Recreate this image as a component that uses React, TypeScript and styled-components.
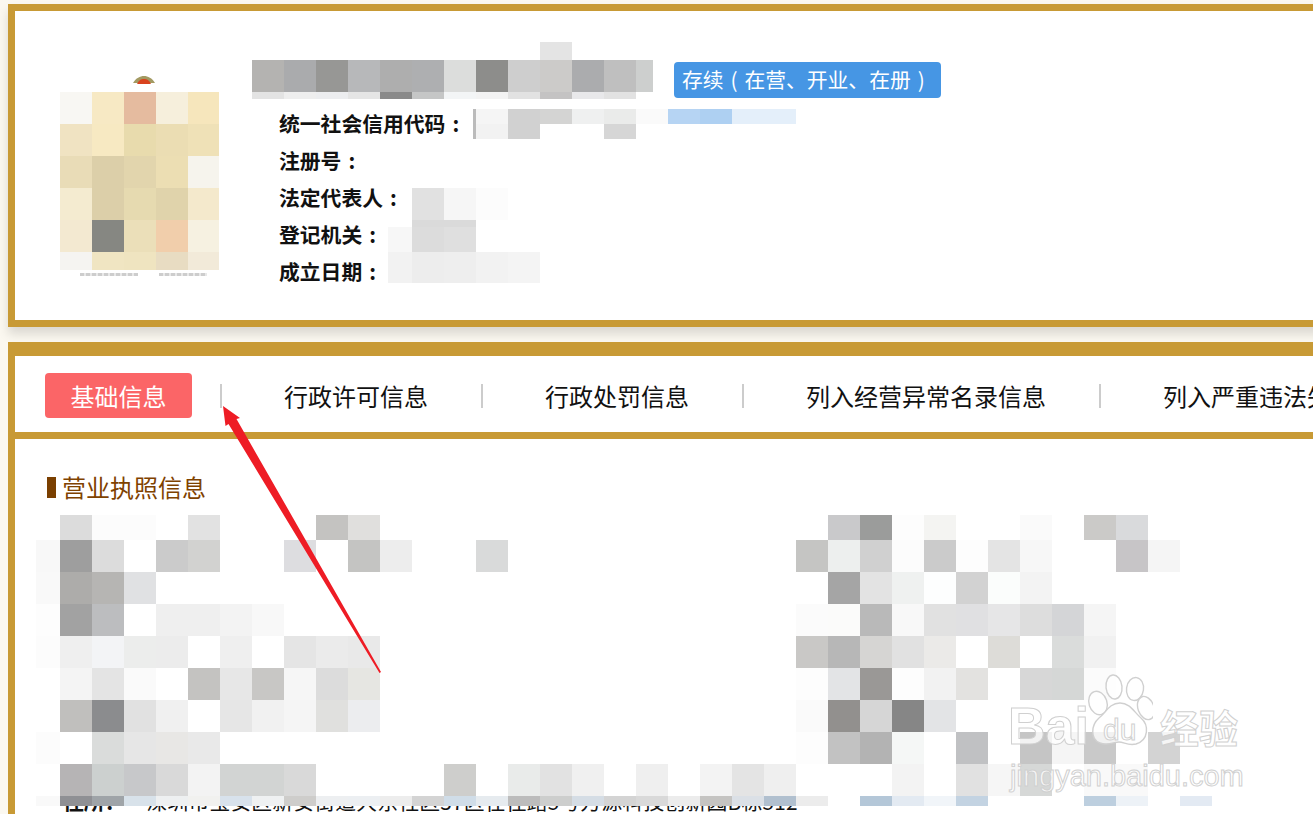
import styled, { createGlobalStyle } from "styled-components";

const GOLD = "#c89a35";

// the blurred blocks of the screenshot: one array per row, "" = nothing there
type Blocks = string[][];

const sparse = (row: Record<number, string>) => {
  const out: string[] = new Array(37).fill("");
  Object.entries(row).forEach(([x, c]) => {
    const col = Number(x) === 36 ? 0 : (Number(x) - 60) / 32 + 1;
    out[col] = c;
  });
  return out;
};

const nameBlocks: Blocks = [
  ["", "", "", "", "", "", "", "", "", "#e4e4e4", "", "", ""],
  ["#b4b3b1", "#aaabad", "#979795", "#b7b8ba", "#aeaeae", "#aeafb1", "#dcdddc", "#8d8d8b", "#cecece", "#cccbc9", "#abacae", "#bfbfbf", "#cdcfce"],
  ["#e3e3e3", "#eeeeee", "#ecedef", "#e5e5e5", "#8a8a8a", "#c5c6c6", "#f3f5f6", "#f3f3f3", "#e2e2e2", "#c4c3c3", "#e8e8ea", "#e2e2e2", ""],
];

const codeBlocks: Blocks = [
  ["#bbbbbb", "#f5f5f5", "#d1d1d1", "#d4d4d3", "#eff0f0", "#eaebea", "#fafafa", "#b6d4f3", "#aed0f2", "#e4effa", "#e4effa"],
  ["#bbbbbb", "#f2f2f2", "#d1d1d1", "", "", "#d6d6d6", "", "", "", "", ""],
];

const legalBlocks: Blocks = [["#e1e1e1", "#f6f6f6", "#fcfcfc"]];

const officeBlocks: Blocks = [
  ["", "#dadada", "#dadada"],
  ["#f7f7f7", "#dcdcdc", "#dfdfdf"],
];

const dateBlocks: Blocks = [["#f2f2f2", "#ededed", "#eeeeee", "#f2f2f2", "#f4f4f4"]];

const emblemBlocks: Blocks = [
  ["#f8f7f3", "#f7e9c4", "#e5bb9f", "#f6efdc", "#f6e6bc"],
  ["#f0e3c2", "#f7e9c2", "#e8dbad", "#ebddb3", "#efe1b7"],
  ["#e9dcb7", "#dccfa9", "#e2d5ad", "#ecdeb3", "#f6f4ed"],
  ["#f4ebd0", "#dccfa9", "#e6dab0", "#e0d3ab", "#f4e9cc"],
  ["#f3e9d1", "#868782", "#ebdfb9", "#f1ceab", "#f6f1e1"],
  ["#f5f4f1", "#f0e5c2", "#efe4c0", "#e8dcc2", "#f2ead9"],
];

const licenceBlocks: Blocks = [
  { 60: "#dcdcdc", 92: "#fcfcfc", 124: "#fcfcfc", 188: "#e2e2e2", 316: "#c4c3c1", 348: "#e0dfdd", 828: "#c9c9cb", 860: "#9b9c9b", 892: "#fdfdfd", 924: "#f4f4f2", 1020: "#fafafa", 1084: "#cbcac8", 1116: "#d9dadc" },
  { 36: "#f8f8f8", 60: "#9e9e9e", 92: "#dcdcdc", 156: "#cbcbcb", 188: "#d2d2d0", 284: "#dddde0", 348: "#c4c4c2", 380: "#ededed", 476: "#d9dada", 796: "#c5c5c3", 828: "#edefee", 860: "#d0d0d0", 892: "#fcfcfc", 924: "#cbcbcb", 956: "#fdfdfd", 988: "#e4e4e4", 1020: "#f7f7f7", 1116: "#c7c5c7", 1148: "#f5f5f5" },
  { 36: "#f9f9f9", 60: "#adacaa", 92: "#b6b5b3", 124: "#e0e1e3", 828: "#a5a5a5", 860: "#e3e3e3", 892: "#eff1f0", 924: "#fdfefe", 956: "#d2d2d2", 988: "#fbfdfc", 1020: "#f3f3f3" },
  { 36: "#fdfdfd", 60: "#a2a2a2", 92: "#bcbdbf", 156: "#efefef", 188: "#efefef", 220: "#f3f3f3", 252: "#f8f8f8", 796: "#fbfbfb", 828: "#fbfbfa", 860: "#b9b9b9", 892: "#f8f8f8", 924: "#e1e1e1", 956: "#e0e0e2", 988: "#e6e6e7", 1020: "#dddddd", 1052: "#d4d5d7", 1084: "#f5f5f5" },
  { 36: "#fcfcfc", 60: "#efefef", 92: "#f3f4f6", 124: "#ecedec", 156: "#ececec", 220: "#efefef", 284: "#e5e5e5", 316: "#ebebeb", 348: "#e9e9e9", 796: "#c9c8c6", 828: "#b7b7b7", 860: "#d6d5d3", 892: "#e1e1e1", 924: "#ebeae8", 988: "#dddcd8", 1052: "#dadcdb", 1084: "#f1f1f1" },
  { 60: "#f4f4f4", 92: "#e4e4e4", 124: "#fafafa", 188: "#c4c3c1", 220: "#e7e7e7", 252: "#c8c7c5", 284: "#f6f6f6", 316: "#dcdcdc", 348: "#e6e6e2", 796: "#fdfdfd", 828: "#e3e4e6", 860: "#9a9896", 892: "#fdfdfd", 924: "#f2f2f2", 956: "#e3e2e0", 1020: "#d7d7d7", 1052: "#d5d7d6", 1084: "#fbfbfb" },
  { 60: "#c0bfbd", 92: "#8b8c8e", 124: "#e1e1e1", 156: "#f0f0f0", 220: "#e6e6e6", 252: "#f1f1f1", 284: "#f5f5f5", 316: "#e0e0de", 348: "#ecedef", 796: "#fafafa", 828: "#92908e", 860: "#d6d6d6", 892: "#868686", 924: "#e3e4e6" },
  { 36: "#fcfcfc", 92: "#dadcdb", 124: "#e6e6e6", 156: "#e8e7e5", 188: "#e9e9e9", 796: "#fdfdfd", 828: "#c2c2c2", 860: "#b3b3b3", 892: "#f5f7f6", 956: "#c0c1c3", 1020: "#c5c5c5", 1052: "#f5f5f5", 1084: "#c9c9c9", 1148: "#d3d3d3" },
  // white tiles here hide the top of the address line below
  { 60: "#b6b4b5", 92: "#ccd0cf", 124: "#c7c8ca", 156: "#d9d9d9", 188: "#f3f3f3", 220: "#d2d4d3", 252: "#d2d4d3", 284: "#d9d9d9", 316: "#fff", 348: "#fff", 380: "#fff", 412: "#fff", 444: "#cececc", 476: "#fff", 508: "#e9ebea", 540: "#e2e2e2", 572: "#f0f0f0", 604: "#fff", 636: "#efefef", 668: "#fff", 700: "#f3f3f3", 732: "#e4e4e4", 764: "#efefef", 892: "#f3f3f3", 956: "#e1e1e1", 988: "#f6f6f6", 1020: "#d6d8d7", 1084: "#f9f9f9", 1116: "#f9f9f9" },
  { 36: "#f9f9f9", 60: "#8f9094", 92: "#9fa4a8", 124: "#d8e2ea", 156: "#eef0f1", 188: "#f1f1ef", 220: "#d8e2ec", 252: "#eff1f2", 284: "#cecdcb", 316: "#edeff1", 348: "#eceff2", 380: "#ededed", 412: "#d4d4d4", 444: "#d0dde8", 476: "#e6ebef", 508: "#bcbcbc", 540: "#cdcecd", 572: "#d5dde5", 604: "#d4d4d4", 636: "#d9d9d9", 668: "#ececec", 700: "#c5c4c2", 732: "#dbe0e6", 764: "#b1c0cf", 796: "#ececec", 860: "#b4c7d8", 892: "#e3eaf2", 924: "#f1f5f9", 956: "#c3d3e2", 1084: "#bdcfdf", 1116: "#edf2f7", 1180: "#e3eaf3" },
].map(sparse);

const Mosaic = ({ cols, rows, blocks }: { cols: string; rows: string; blocks: Blocks }) => (
  <MosaicGrid $cols={cols} $rows={rows}>
    {blocks.flatMap((row, r) => row.map((c, i) => <Tile key={`${r}-${i}`} $c={c} />))}
  </MosaicGrid>
);

const App = () => {
  return (
    <Page>
      <GlobalStyle />
      <TopCard>
        <Emblem>
          <Dome width="24" height="8" viewBox="0 0 24 8">
            <path d="M1 7C4 2 8 0 12 0s8 2 11 7z" fill="#a39a62" />
            <path d="M5 8C7 4 9 3 12 3s5 1 7 5z" fill="#d9431f" />
          </Dome>
          <Mosaic cols="repeat(4, 32px) 31px" rows="repeat(5, 32px) 18px" blocks={emblemBlocks} />
          <EmblemCaption>
            <CaptionBar $w={58} />
            <CaptionBar $w={48} />
          </EmblemCaption>
        </Emblem>
        <Info>
          <NameRow>
            <Mosaic cols="repeat(12, 32px) 17px" rows="18px 32px 7px" blocks={nameBlocks} />
            <StatusBadge>
              存续<Paren>(</Paren>在营、开业、在册<Paren>)</Paren>
            </StatusBadge>
          </NameRow>
          <Fields>
            <Field>
              <FieldLabel>
                统一社会信用代码<Colon>:</Colon>
              </FieldLabel>
              <FieldValue $top={3} $left={7}>
                <Mosaic cols="3px repeat(10, 32px)" rows="15px 15px" blocks={codeBlocks} />
              </FieldValue>
            </Field>
            <Field>
              <FieldLabel>
                注册号<Colon>:</Colon>
              </FieldLabel>
            </Field>
            <Field>
              <FieldLabel>
                法定代表人<Colon>:</Colon>
              </FieldLabel>
              <FieldValue $top={8} $left={8}>
                <Mosaic cols="repeat(3, 32px)" rows="32px" blocks={legalBlocks} />
              </FieldValue>
            </Field>
            <Field>
              <FieldLabel>
                登记机关<Colon>:</Colon>
              </FieldLabel>
              <FieldValue $top={3} $left={5}>
                <Mosaic cols="24px 32px 32px" rows="7px 25px" blocks={officeBlocks} />
              </FieldValue>
            </Field>
            <Field>
              <FieldLabel>
                成立日期<Colon>:</Colon>
              </FieldLabel>
              <FieldValue $top={-2} $left={5}>
                <Mosaic cols="24px repeat(4, 32px)" rows="31px" blocks={dateBlocks} />
              </FieldValue>
            </Field>
          </Fields>
        </Info>
      </TopCard>

      <DetailCard>
        <TabBar>
          <ActiveTab>基础信息</ActiveTab>
          <TabDivider />
          <Tab>行政许可信息</Tab>
          <TabDivider />
          <Tab>行政处罚信息</Tab>
          <TabDivider />
          <Tab>列入经营异常名录信息</Tab>
          <TabDivider />
          <Tab>列入严重违法失信企业名单信息</Tab>
        </TabBar>
        <Content>
          <SectionTitle>营业执照信息</SectionTitle>
          <LicenceArea>
            <Mosaic cols="24px repeat(36, 32px)" rows="25px repeat(8, 32px) 10px" blocks={licenceBlocks} />
          </LicenceArea>
          <Address>
            <b>住所：</b>
            <AddressValue>深圳市宝安区新安街道大东社区37区在径路5号万源科技创新园B栋512</AddressValue>
          </Address>
        </Content>
      </DetailCard>

      <Arrow width="170" height="280" viewBox="0 0 170 280">
        <polygon points="3,2 20,14 16.5,15 161,268 159.5,269 8.5,20 5.5,22" fill="#ee1c25" />
      </Arrow>

      <Watermark>
        <WatermarkLogo>
          <WatermarkBig>Bai</WatermarkBig>
          <Paw width="66" height="76" viewBox="0 0 66 76">
            <g fill="#fff" fillOpacity="0.75" stroke="#d0d0d0" strokeWidth="1.4">
              <ellipse cx="11" cy="30" rx="9" ry="12" transform="rotate(-18 11 30)" />
              <ellipse cx="27" cy="14" rx="8" ry="12" transform="rotate(-6 27 14)" />
              <ellipse cx="48" cy="16" rx="8.5" ry="11.5" transform="rotate(8 48 16)" />
              <ellipse cx="59" cy="35" rx="8" ry="12" transform="rotate(-20 59 35)" />
              <path d="M33 30c10 0 14 9 21 15 8 7 8 22-5 26-8 2-12-2-17-2s-11 4-19 1C3 66 4 52 12 45c7-5 10-15 21-15z" />
            </g>
          </Paw>
          <PawText>du</PawText>
          <WatermarkCjk>经验</WatermarkCjk>
        </WatermarkLogo>
        <WatermarkUrl>jingyan.baidu.com</WatermarkUrl>
      </Watermark>
    </Page>
  );
};
export default App;

const GlobalStyle = createGlobalStyle`
  html, body {
    margin: 0;
    padding: 0;
    background: #fbf8f0;
  }
  body {
    font-family: "Noto Sans CJK SC", "Liberation Sans", sans-serif;
  }
`;

const Page = styled.div`
  position: relative;
  width: 1313px;
  height: 814px;
  overflow: hidden;
  padding: 4px 0 0 8px;
  box-sizing: border-box;
`;

const MosaicGrid = styled.div<{ $cols: string; $rows: string }>`
  display: grid;
  grid-template-columns: ${(p) => p.$cols};
  grid-template-rows: ${(p) => p.$rows};
  width: max-content;
`;

const Tile = styled.div<{ $c: string }>`
  background: ${(p) => p.$c || "transparent"};
`;

const TopCard = styled.section`
  display: flex;
  align-items: flex-start;
  box-sizing: border-box;
  width: 1340px;
  height: 323px;
  padding-left: 45px;
  background: #fff;
  border: 7px solid ${GOLD};
  border-right: none;
  box-shadow: 0 7px 10px rgba(0, 0, 0, 0.13);
`;

const Emblem = styled.div`
  display: flex;
  flex-direction: column;
  width: 159px;
  margin-top: 65px;
`;

const Dome = styled.svg`
  display: block;
  margin: 0 0 8px 72px;
`;

const EmblemCaption = styled.div`
  display: flex;
  gap: 21px;
  margin: 3px 0 0 20px;
`;

const CaptionBar = styled.div<{ $w: number }>`
  width: ${(p) => p.$w}px;
  height: 3px;
  background: repeating-linear-gradient(90deg, #cdcdcd 0 4px, #e8e8e8 4px 6px);
`;

const Info = styled.div`
  margin: 31px 0 0 33px;
`;

const NameRow = styled.div`
  display: flex;
  align-items: flex-start;
`;

const StatusBadge = styled.div`
  margin: 20px 0 0 21px;
  padding: 0 9px 0 8px;
  height: 36px;
  line-height: 35px;
  font-size: 20.8px;
  color: #fff;
  background: #4696e4;
  border-radius: 4px;
  white-space: nowrap;
`;

const Paren = styled.span`
  display: inline-block;
  width: 1em;
  text-align: center;
`;

const Fields = styled.div`
  margin: 7px 0 0 27px;
`;

const Field = styled.div`
  display: flex;
  align-items: flex-start;
  height: 37px;
`;

const FieldLabel = styled.div`
  font-size: 20.8px;
  font-weight: 700;
  line-height: 35px;
  color: #111;
  white-space: nowrap;
`;

const Colon = styled.span`
  display: inline-block;
  width: 1em;
  text-align: center;
`;

const FieldValue = styled.div<{ $top: number; $left: number }>`
  margin-top: ${(p) => p.$top}px;
  margin-left: ${(p) => p.$left}px;
`;

const DetailCard = styled.section`
  box-sizing: border-box;
  width: 1340px;
  height: 500px;
  margin-top: 15px;
  background: #fff;
  border-left: 7px solid ${GOLD};
  border-top: 14px solid ${GOLD};
`;

const TabBar = styled.nav`
  display: flex;
  align-items: center;
  box-sizing: border-box;
  height: 83px;
  padding: 3px 0 0 30px;
  border-bottom: 7px solid ${GOLD};
  font-size: 24px;
  white-space: nowrap;
`;

const ActiveTab = styled.div`
  flex: none;
  width: 147px;
  height: 45px;
  margin-right: 28px;
  line-height: 45px;
  text-align: center;
  color: #fff;
  background: #fb6567;
  border-radius: 4px;
`;

const TabDivider = styled.div`
  flex: none;
  width: 2px;
  height: 24px;
  background: #cccccc;
`;

const Tab = styled.div`
  flex: none;
  padding: 0 53px 0 62px;
  color: #111;
`;

const Content = styled.div`
  padding: 32px 0 0 21px;
`;

const SectionTitle = styled.h2`
  display: flex;
  align-items: center;
  margin: 0 0 12px 11px;
  font-size: 24px;
  font-weight: 400;
  line-height: 32px;
  color: #7f4200;

  &::before {
    content: "";
    width: 9px;
    height: 21px;
    margin-right: 6px;
    background: #7a3f00;
  }
`;

const LicenceArea = styled.div`
  position: relative;
  z-index: 1;
`;

const Address = styled.div`
  display: flex;
  gap: 21px;
  margin: -20px 0 0 27px;
  font-size: 20.8px;
  line-height: 30px;
  color: #111;
  white-space: nowrap;
`;

const AddressValue = styled.span`
  letter-spacing: 0.2px;
`;

const Arrow = styled.svg`
  position: absolute;
  left: 220px;
  top: 404px;
  z-index: 2;
`;

const Watermark = styled.div`
  position: absolute;
  left: 1008px;
  top: 673px;
  z-index: 3;
`;

const WatermarkLogo = styled.div`
  position: relative;
  display: flex;
  align-items: flex-end;
  height: 76px;
`;

const outlined = `
  color: rgba(255, 255, 255, 0.78);
  -webkit-text-stroke: 1px #d0d0d0;
`;

const WatermarkBig = styled.span`
  ${outlined}
  width: 80px;
  font-family: "Liberation Sans", sans-serif;
  font-size: 52px;
  font-weight: 700;
  line-height: 46px;
`;

const Paw = styled.svg`
  flex: none;
  margin-left: -1px;
`;

const PawText = styled.span`
  ${outlined}
  position: absolute;
  left: 95px;
  top: 42px;
  font-family: "Liberation Sans", sans-serif;
  font-size: 30px;
  line-height: 30px;
`;

const WatermarkCjk = styled.span`
  ${outlined}
  margin-left: 7px;
  font-size: 39px;
  font-weight: 700;
  line-height: 46px;
  white-space: nowrap;
`;

const WatermarkUrl = styled.div`
  ${outlined}
  margin: 8px 0 0 2px;
  font-family: "Liberation Sans", sans-serif;
  font-size: 29px;
  line-height: 38px;
  white-space: nowrap;
`;
